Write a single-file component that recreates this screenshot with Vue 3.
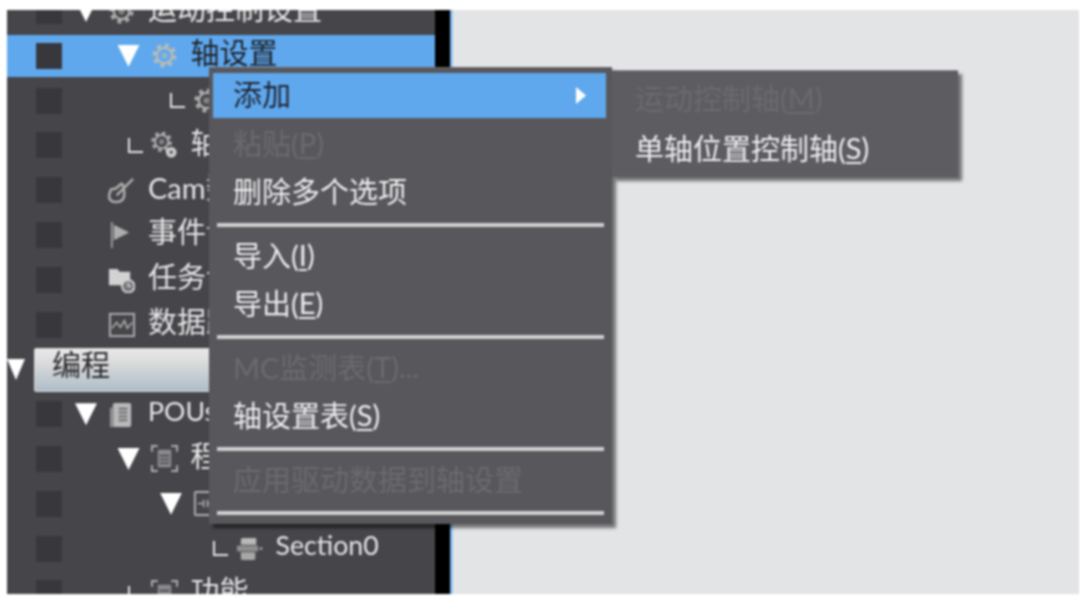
<script setup>
const gear = '<circle cx="14" cy="14" r="10.5" fill="none" stroke="currentColor" stroke-width="4" stroke-dasharray="4 4.25"/><circle cx="14" cy="14" r="8" fill="none" stroke="currentColor" stroke-width="2.5"/><circle cx="14" cy="14" r="3.2" fill="currentColor" opacity=".6"/>'

const icons = {
  gear,
  gearBadge: '<g transform="translate(-1 -2) scale(.86)">' + gear + '</g><circle cx="21" cy="21" r="5.5" fill="#d0d0d0"/><circle cx="21" cy="21" r="2" fill="#6b6a6e"/>',
  cam: '<path d="M3 13 L8 12 L14 7 L16 9 L17 17 Q17 26 8 26 Q1 26 1 19 Z" fill="none" stroke="currentColor" stroke-width="2.6"/><path d="M9 19 L26 2" stroke="currentColor" stroke-width="2.4" fill="none"/>',
  flag: '<path d="M4 1 V28" stroke="currentColor" stroke-width="1.6" fill="none"/><path d="M6 4 L22 12 L6 20 Z" fill="currentColor"/>',
  task: '<path d="M1 3 H10 L12 6 H23 V20 H1 Z" fill="#d2d2d2"/><circle cx="21" cy="21" r="6.5" fill="#77767a" stroke="#d2d2d2" stroke-width="2"/><path d="M21 17 V21 H24" stroke="#d2d2d2" stroke-width="1.5" fill="none"/>',
  chart: '<rect x="2" y="3" width="25" height="23" fill="none" stroke="currentColor" stroke-width="2"/><path d="M4 18 L9 12 L13 17 L17 10 L20 18 L25 12" stroke="currentColor" stroke-width="1.6" fill="none"/>',
  pou: '<rect x="5" y="2" width="19" height="25" rx="2" fill="#b9b9b9"/><rect x="2" y="7" width="4" height="20" fill="#8f8f8f"/><path d="M11 8 H20 M11 12 H20 M11 16 H20 M11 20 H20" stroke="#6e6d70" stroke-width="2"/>',
  program: '<path d="M1 7 V1 H7 M21 1 H27 V7 M27 21 V27 H21 M7 27 H1 V21" stroke="currentColor" stroke-width="2" fill="none"/><rect x="7" y="5" width="14" height="18" rx="1" fill="#8b8a8d"/><path d="M9 11 H19 M9 15 H19 M9 19 H19" stroke="#4b4a4e" stroke-width="1.6"/>',
  ladder: '<rect x="2" y="2" width="24" height="24" rx="1" fill="none" stroke="currentColor" stroke-width="2"/><path d="M5 14 H11 M11 10 V18 M15 10 V18 M15 14 H23" stroke="currentColor" stroke-width="1.6" fill="none"/>',
  section: '<path d="M5 5 Q5 3 7 3 H21 V10 H5 Z" fill="#b9b9b9"/><rect x="1" y="11" width="22" height="6" fill="#8f8f8f"/><path d="M5 18 H20 V24 Q20 26 18 26 H7 Q5 26 5 24 Z" fill="#a8a8a8"/><circle cx="26" cy="14" r="1.4" fill="#b9b9b9"/>'
}

// leaf: true draws the little corner line in place of the arrow
const rows = [
  { level: 1, arrow: true, icon: 'gear', text: '运动控制设置' },
  { level: 2, arrow: true, icon: 'gear', text: '轴设置', selected: true },
  { level: 3, leaf: true, icon: 'gear', text: 'MC_Axis000' },
  { level: 2, leaf: true, icon: 'gearBadge', text: '轴组设置' },
  { level: 1, icon: 'cam', text: 'Cam数据设置' },
  { level: 1, icon: 'flag', text: '事件设置' },
  { level: 1, icon: 'task', text: '任务设置' },
  { level: 1, icon: 'chart', text: '数据跟踪设置' },
  { header: true, text: '编程' },
  { level: 1, arrow: true, icon: 'pou', text: 'POUs', latin: true },
  { level: 2, arrow: true, icon: 'program', text: '程序' },
  { level: 3, arrow: true, icon: 'ladder', text: 'Program0' },
  { level: 4, leaf: true, icon: 'section', text: 'Section0', latin: true },
  { level: 2, leaf: true, icon: 'program', text: '功能' }
]

function indent(level) {
  return { marginLeft: 13 + (level - 1) * 42.5 + 'px' }
}
</script>

<template>
  <div class="frame">
    <aside class="sidebar">
      <div class="tree">
        <template v-for="row in rows" :key="row.text">
          <div v-if="row.header" class="row header-row">
            <span class="arrow"></span>
            <div class="group">{{ row.text }}</div>
          </div>
          <div v-else class="row" :class="{ selected: row.selected }">
            <span class="square"></span>
            <div class="node" :style="indent(row.level)">
              <span class="slot">
                <span v-if="row.arrow" class="arrow"></span>
                <span v-else-if="row.leaf" class="leaf"></span>
              </span>
              <svg class="icon" viewBox="0 0 28 28" v-html="icons[row.icon]"></svg>
              <span class="label" :class="{ latin: row.latin }">{{ row.text }}</span>
            </div>
          </div>
        </template>
      </div>
    </aside>
    <div class="divider"></div>
    <div class="accent"></div>
    <main class="workspace"></main>

    <div class="menu main-menu">
      <div class="item active">添加<span class="more"></span></div>
      <div class="item off">粘贴(<u>P</u>)</div>
      <div class="item">删除多个选项</div>
      <div class="sep"></div>
      <div class="item">导入(<u>I</u>)</div>
      <div class="item">导出(<u>E</u>)</div>
      <div class="sep"></div>
      <div class="item off">MC监测表(<u>T</u>)...</div>
      <div class="item">轴设置表(<u>S</u>)</div>
      <div class="sep"></div>
      <div class="item off">应用驱动数据到轴设置</div>
      <div class="sep"></div>
    </div>

    <div class="menu sub-menu">
      <div class="item off">运动控制轴(<u>M</u>)</div>
      <div class="item">单轴位置控制轴(<u>S</u>)</div>
    </div>
  </div>
</template>

<style>
html, body {
  background: #fff;
}
</style>

<style scoped>
.frame {
  position: relative;
  display: flex;
  width: 1072px;
  height: 584px;
  margin: 10px 1px 5px 7px;
  overflow: hidden;
  font-family: Lato, "Noto Sans CJK SC", sans-serif;
  filter: blur(0.8px);
}

.sidebar {
  width: 428px;
  flex-shrink: 0;
  background: #464549;
  overflow: hidden;
}

.divider {
  width: 15px;
  flex-shrink: 0;
  background: #000;
}

.accent {
  width: 3px;
  flex-shrink: 0;
  background: linear-gradient(90deg, #5fa3e6, #b8d4f0);
}

.workspace {
  flex: 1;
  background: #e3e4e6;
}

.tree {
  margin-top: -20px;
}

.row {
  display: flex;
  align-items: center;
  height: 42px;
  margin-bottom: 2.8px;
  color: #e6e6e8;
  white-space: nowrap;
}

.row.selected {
  background: #5fa8ee;
  color: #1f2126;
}

.square {
  width: 26px;
  height: 26px;
  margin-left: 29px;
  flex-shrink: 0;
  background: #38373c;
}

.node {
  display: flex;
  align-items: center;
}

.slot {
  display: flex;
  width: 22px;
  margin-right: 11px;
  flex-shrink: 0;
}

.arrow {
  display: block;
  width: 22px;
  height: 22px;
  flex-shrink: 0;
  background: #fff;
  clip-path: polygon(0 0, 100% 0, 50% 100%);
}

.leaf {
  display: block;
  width: 15px;
  height: 15px;
  margin-left: 10px;
  flex-shrink: 0;
  border-left: 2px solid #e4e4e4;
  border-bottom: 2px solid #e4e4e4;
  box-sizing: border-box;
}

.icon {
  width: 27px;
  height: 27px;
  margin-right: 13px;
  flex-shrink: 0;
  color: #aeaeae;
}

.selected .icon {
  color: #b9bbb6;
}

.label {
  font-size: 29px;
  line-height: 1;
  padding-bottom: 6px;
}

.label.latin {
  font-size: 26.7px;
}

.header-row {
  color: #2a2a2e;
}

.header-row .arrow {
  width: 18px;
  height: 21px;
}

.group {
  width: 396px;
  height: 44px;
  margin: 1px 0 0 9px;
  padding-left: 17px;
  box-sizing: border-box;
  border: 1px solid #d8d8d8;
  border-radius: 2px;
  background: linear-gradient(#e8e8e8, #dcdcdc 30%, #aebdc8);
  font-size: 29px;
  line-height: 32px;
}

.menu {
  position: absolute;
  display: flex;
  flex-direction: column;
  box-sizing: border-box;
  color: #eeeef0;
  font-size: 29px;
  white-space: nowrap;
  box-shadow: 4px 4px 3px rgba(0, 0, 0, 0.5);
}

.main-menu {
  left: 202px;
  top: 57px;
  width: 403px;
  height: 457px;
  padding: 5px 6px 0 4px;
  background: #58575b;
  border-top: 1px solid #6b6a6e;
}

.sub-menu {
  left: 605px;
  top: 60px;
  width: 346px;
  height: 107px;
  padding: 4px 0 0 23px;
  background: #5d5c61;
  border-top: 1px solid #8d8d8f;
}

.item {
  display: flex;
  align-items: center;
  position: relative;
  flex-shrink: 0;
  height: 45px;
  margin-bottom: 3px;
  padding: 0 0 3px 20px;
  box-sizing: border-box;
}

.item.active {
  padding-bottom: 5px;
}

.sub-menu .item {
  height: 47px;
  padding-left: 0;
}

.item u {
  text-underline-offset: 3px;
}

.item.active {
  background: #5fa8ee;
  color: #1f2430;
}

.item.off {
  color: #6b6a6e;
}

.more {
  position: absolute;
  left: 363px;
  top: 14px;
  width: 10px;
  height: 17px;
  background: #fff;
  clip-path: polygon(0 0, 100% 50%, 0 100%);
}

.sep {
  flex-shrink: 0;
  height: 4px;
  margin: 6px 2px 6px 4px;
  background: #cfcfcf;
}
</style>
